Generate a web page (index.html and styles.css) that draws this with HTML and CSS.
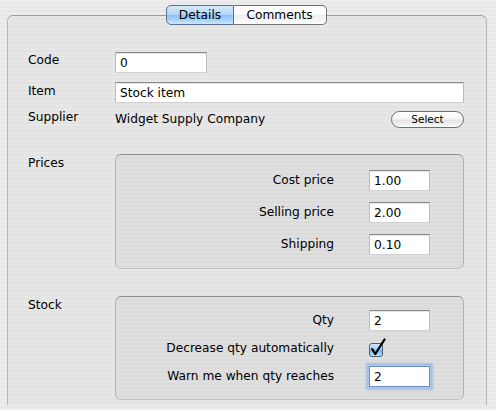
FILE: index.html
```html
<!DOCTYPE html>
<html>
<head>
<meta charset="utf-8">
<link rel="stylesheet" href="styles.css">
</head>
<body>
<div class="tabs">
  <span class="tab tab-sel">Details</span><span class="tab tab-off">Comments</span>
</div>
<div class="panel">
  <div class="row row-code">
    <div class="lbl">Code</div>
    <div><div class="field field-code">0</div></div>
  </div>
  <div class="row row-item">
    <div class="lbl">Item</div>
    <div><div class="field field-item">Stock item</div></div>
  </div>
  <div class="row row-supplier">
    <div class="lbl lbl-sup">Supplier</div>
    <div class="supplier">
      <span class="sup-name">Widget Supply Company</span>
      <span class="btn">Select</span>
    </div>
  </div>
  <div class="row row-prices">
    <div class="lbl lbl-group">Prices</div>
    <div class="group group-prices">
      <div class="glbl">Cost price</div><div class="field field-num">1.00</div>
      <div class="glbl">Selling price</div><div class="field field-num">2.00</div>
      <div class="glbl">Shipping</div><div class="field field-num">0.10</div>
    </div>
  </div>
  <div class="row row-stock">
    <div class="lbl lbl-group">Stock</div>
    <div class="group group-stock">
      <div class="glbl">Qty</div><div class="field field-num">2</div>
      <div class="glbl">Decrease qty automatically</div>
      <div class="check-cell">
        <div class="cbox">
          <svg class="cmark" width="18" height="21" viewBox="0 0 18 21">
            <path d="M3.2 11.2 L6.3 16 L15.5 1.5" fill="none" stroke="#000" stroke-width="2.3" stroke-linecap="round" stroke-linejoin="round"/>
          </svg>
        </div>
      </div>
      <div class="glbl">Warn me when qty reaches</div><div class="field field-num field-focus">2</div>
    </div>
  </div>
</div>
</body>
</html>
```

FILE: styles.css
```css
html, body {
  margin: 0;
  padding: 0;
  height: 410px;
  overflow: hidden;
}
body {
  font-family: "DejaVu Sans", "Liberation Sans", sans-serif;
  font-size: 12.2px;
  color: #000;
  background: repeating-linear-gradient(to bottom, #ececec 0, #ececec 2px, #e7e7e7 2px, #e7e7e7 4px);
  padding-top: 5px;
  box-sizing: border-box;
}
.tabs {
  position: relative;
  z-index: 1;
  display: flex;
  justify-content: center;
  padding-right: 4px;
  height: 20px;
}
.tab {
  box-sizing: border-box;
  height: 20px;
  line-height: 18px;
  text-align: center;
  border: 1px solid #6f6f6f;
  padding-left: 1px;
}
.tab-sel {
  width: 68px;
  border-radius: 5px 0 0 5px;
  background: linear-gradient(to bottom, #d6e9fc 0%, #b4d6f8 48%, #8dc0f1 52%, #a9d4fa 80%, #cdeaff 100%);
  border-color: #5b6f8e;
}
.tab-off {
  width: 93px;
  border-left: none;
  border-radius: 0 5px 5px 0;
  background: linear-gradient(to bottom, #ffffff 0%, #fafafa 48%, #efefef 52%, #f7f7f7 85%, #ffffff 100%);
  padding-left: 0;
}
.panel {
  margin: -10px 9px 0 7px;
  height: 390px;
  box-sizing: border-box;
  border: 1px solid #a3a3a3;
  border-bottom: none;
  border-color: #9d9d9d #b6b6b6 #bcbcbc #b6b6b6;
  border-radius: 6px 6px 0 0;
  background: repeating-linear-gradient(to bottom, #e7e7e7 0, #e7e7e7 2px, #e3e3e3 2px, #e3e3e3 4px);
  padding: 36px 22px 0 20px;
}
.row {
  display: grid;
  grid-template-columns: 87px 1fr;
}
.row-item { margin-top: 9px; }
.row-supplier { margin-top: 8px; height: 17px; }
.row-prices { margin-top: 26px; }
.row-stock { margin-top: 27px; }
.lbl {
  line-height: 15px;
  padding-top: 1px;
}
.row-item .lbl { padding-top: 2px; }
.lbl-sup { padding-top: 0; margin-top: -1px; }
.lbl-group { padding-top: 2px; }
.field {
  box-sizing: border-box;
  height: 21px;
  line-height: 19px;
  background: #fff;
  border: 1px solid #a0a0a0;
  border-color: #8a8a8a #bdbdbd #d2d2d2 #bdbdbd;
  box-shadow: inset 0 1px 0 #e4e4e4;
  padding: 1px 0 0 4px;
  white-space: nowrap;
}
.field-code { width: 92px; }
.field-item { width: 349px; }
.field-num { width: 61px; }
.field-focus {
  border-color: #6c8fc2;
  box-shadow: 0 0 0 1px #a9c6ec, 0 0 2px 3px rgba(120, 165, 225, 0.55);
}
.supplier {
  display: flex;
  justify-content: space-between;
  align-items: center;
}
.sup-name {
  line-height: 15px;
  margin-top: -1px;
}
.btn {
  box-sizing: border-box;
  width: 73px;
  height: 17px;
  line-height: 15px;
  text-align: center;
  font-size: 10.5px;
  border: 1px solid #6e6e6e;
  border-radius: 9px;
  background: linear-gradient(to bottom, #ffffff 0%, #f6f6f6 45%, #e4e4e4 55%, #f2f2f2 85%, #ffffff 100%);
}
.group {
  box-sizing: border-box;
  width: 349px;
  border: 1px solid #a6a6a6;
  border-color: #8f8f8f #b3b3b3 #c3c3c3 #b3b3b3;
  border-radius: 6px;
  background: repeating-linear-gradient(to bottom, #dfdfdf 0, #dfdfdf 2px, #dbdbdb 2px, #dbdbdb 4px);
  display: grid;
  grid-template-columns: 1fr 61px;
  column-gap: 35px;
  align-items: center;
  padding-right: 33px;
}
.group-prices {
  row-gap: 11px;
  padding-top: 15px;
  padding-bottom: 13px;
}
.group-stock {
  row-gap: 7px;
  padding-top: 13px;
  padding-bottom: 12px;
}
.glbl {
  text-align: right;
  line-height: 15px;
  white-space: nowrap;
}
.check-cell {
  height: 21px;
  padding-top: 5px;
  box-sizing: border-box;
}
.cbox {
  position: relative;
  width: 14px;
  height: 14px;
  box-sizing: border-box;
  border: 1px solid #4a5f80;
  border-radius: 3px;
  background-color: #8fc0f0;
  background-image: linear-gradient(to bottom, #cfe5fb 0%, #a2ccf4 48%, #7db4ec 55%, #bfe0fd 100%);
}
.cmark {
  position: absolute;
  left: -1px;
  top: -6px;
  display: block;
}
```
